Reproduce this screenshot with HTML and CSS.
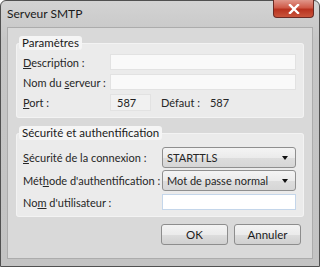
FILE: index.html
```html
<!DOCTYPE html>
<html lang="fr">
<head>
  <meta charset="UTF-8" />
  <title>Serveur SMTP</title>
  <link rel="stylesheet" href="styles.css">
</head>
<body>

  <div class="window">
    <div class="titlebar">
      <span class="title">Serveur SMTP</span>
      <button class="close" title="Fermer">
        <svg width="12" height="10" viewBox="0 0 12 10">
          <path d="M2 1 L10 9 M10 1 L2 9" stroke="#fff" stroke-width="2.4" stroke-linecap="square"/>
        </svg>
      </button>
    </div>

    <div class="client">
      <fieldset class="group group-server">
        <legend>Paramètres</legend>
        <div class="row">
          <label for="description"><u>D</u>escription :</label>
          <input type="text" id="description" class="field" />
        </div>
        <div class="row">
          <label for="hostname">Nom du <u>s</u>erveur :</label>
          <input type="text" id="hostname" class="field" />
        </div>
        <div class="row">
          <label for="port"><u>P</u>ort :</label>
          <div class="port-line">
            <input type="text" id="port" class="field port" value="587" />
            <span class="default-label">Défaut :</span>
            <span class="default-value">587</span>
          </div>
        </div>
      </fieldset>

      <fieldset class="group group-security">
        <legend>Sécurité et authentification</legend>
        <div class="row">
          <label for="socketType"><u>S</u>écurité de la connexion :</label>
          <div class="dropdown" id="socketType">
            <span>STARTTLS</span>
            <i class="arrow"></i>
          </div>
        </div>
        <div class="row">
          <label for="authMethod">Mét<u>h</u>ode d'authentification :</label>
          <div class="dropdown" id="authMethod">
            <span>Mot de passe normal</span>
            <i class="arrow"></i>
          </div>
        </div>
        <div class="row row-user">
          <label for="username">No<u>m</u> d'utilisateur :</label>
          <input type="text" id="username" class="field user" />
        </div>
      </fieldset>

      <div class="buttons">
        <button class="btn">OK</button>
        <button class="btn">Annuler</button>
      </div>
    </div>
  </div>

</body>
</html>
```

FILE: styles.css
```css
body {
  margin: 0;
  font-family: Lato, 'Noto Sans', sans-serif;
  font-size: 11px;
  color: #262626;
  background: #ffffff;
}

.window {
  width: 320px;
  height: 267px;
  box-sizing: border-box;
  border: 1px solid #505050;
  border-radius: 6px 6px 0 0;
  background: linear-gradient(#d3d3d3, #c6c6c6 40px, #c3c3c3);
  padding: 0 6px 7px;
  display: flex;
  flex-direction: column;
}

.titlebar {
  height: 26px;
  flex: none;
  display: flex;
  align-items: flex-start;
  justify-content: space-between;
}

.title {
  font-size: 12px;
  color: #1a1a1a;
  margin: 5px 0 0 0;
}

.close {
  width: 41px;
  height: 18px;
  margin-top: -1px;
  margin-right: -1px;
  border: 1px solid #6b2a24;
  border-top: none;
  border-radius: 0 0 4px 4px;
  background: linear-gradient(#e0968a, #cf5a48 45%, #b8321f 55%, #c9553c);
  display: flex;
  align-items: center;
  justify-content: center;
  padding: 0;
}

.client {
  flex: 1;
  border: 1px solid #acacac;
  background: #d9d9d9;
  padding: 8px 8px 0;
  display: flex;
  flex-direction: column;
}

.group {
  margin: 0;
  border: 1px solid #f3f3f3;
  border-radius: 3px;
  background: #ebebeb;
  padding: 4px 7px 6px 6px;
}

.group legend {
  font-size: 11.5px;
  line-height: 14px;
  padding: 0 3px;
  margin-left: -4px;
  background: #f5f5f5;
  border-radius: 3px;
  color: #1a1a1a;
}

.group-security {
  margin-top: 8px;
  padding-top: 7px;
}

.row {
  display: grid;
  grid-template-columns: 87px minmax(0, 1fr);
  align-items: center;
  margin-bottom: 4px;
}

.row:last-child {
  margin-bottom: 0;
}

.group-security .row {
  grid-template-columns: 139px minmax(0, 1fr);
  margin-bottom: 2px;
}

.group-security .row-user {
  margin-top: 3px;
  margin-bottom: 0;
}

label {
  white-space: nowrap;
}

.field {
  height: 16px;
  box-sizing: border-box;
  border: 1px solid #e2e2e2;
  background: #f9f9f9;
  font-family: inherit;
  font-size: 11px;
  padding: 0 4px;
  margin: 0;
  width: 100%;
  color: #222;
}

.port-line {
  display: flex;
  align-items: center;
}

.field.port {
  width: 41px;
  height: 17px;
  background: #f1f1f1;
  padding-left: 6px;
}

.default-label {
  margin-left: 10px;
}

.default-value {
  margin-left: 10px;
}

.field.user {
  background: #ffffff;
  border-color: #c4d6ea;
}

.dropdown {
  height: 21px;
  box-sizing: border-box;
  border: 1px solid #8f8f8f;
  border-radius: 3px;
  background: linear-gradient(#f4f4f4, #ebebeb 50%, #dddddd 51%, #d6d6d6);
  display: flex;
  align-items: center;
  justify-content: space-between;
  padding: 0 7px 0 4px;
}

.arrow {
  width: 0;
  height: 0;
  border-left: 3.5px solid transparent;
  border-right: 3.5px solid transparent;
  border-top: 4px solid #111;
}

.buttons {
  display: flex;
  justify-content: flex-end;
  gap: 6px;
  margin-top: 7px;
  padding-right: 3px;
}

.btn {
  width: 67px;
  height: 21px;
  box-sizing: border-box;
  border: 1px solid #8d8d8d;
  border-radius: 3px;
  background: linear-gradient(#f3f3f3, #ebebeb 50%, #dddddd 51%, #d0d0d0);
  font-family: inherit;
  font-size: 11.5px;
  color: #1a1a1a;
  padding: 0;
}
```
